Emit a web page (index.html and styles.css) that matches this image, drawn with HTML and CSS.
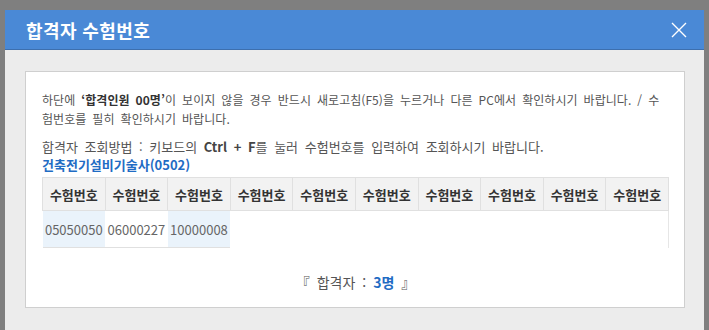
FILE: index.html
```html
<!DOCTYPE html>
<html lang="ko">
<head>
<meta charset="utf-8">
<link rel="stylesheet" href="styles.css">
</head>
<body>
<div class="backdrop">
  <div class="modal">
    <div class="modal-head">
      <h1 class="modal-title">합격자 수험번호</h1>
      <svg class="close" width="16" height="16" viewBox="0 0 16 16"><path d="M1 1L15 15M15 1L1 15" stroke="#fff" stroke-width="1.4" fill="none"/></svg>
    </div>
    <div class="modal-body">
      <div class="panel">
        <p class="notice">하단에 <b>‘합격인원 00명’</b>이 보이지 않을 경우 반드시 새로고침(F5)을 누르거나 다른 PC에서 확인하시기 바랍니다. / 수험번호를 필히 확인하시기 바랍니다.</p>
        <p class="howto">합격자 조회방법 : 키보드의 <b>Ctrl + F</b>를 눌러 수험번호를 입력하여 조회하시기 바랍니다.</p>
        <p class="subject">건축전기설비기술사(0502)</p>
        <table class="nums">
          <thead>
            <tr>
              <th>수험번호</th><th>수험번호</th><th>수험번호</th><th>수험번호</th><th>수험번호</th>
              <th>수험번호</th><th>수험번호</th><th>수험번호</th><th>수험번호</th><th>수험번호</th>
            </tr>
          </thead>
          <tbody>
            <tr>
              <td class="hl">05050050</td><td>06000227</td><td class="hl">10000008</td>
              <td class="empty" colspan="7"></td>
            </tr>
          </tbody>
        </table>
        <p class="total">『 합격자 : <strong>3명</strong> 』</p>
      </div>
    </div>
  </div>
</div>
</body>
</html>
```
FILE: styles.css
```css
html, body {
  margin: 0;
  padding: 0;
  height: 100%;
}
body {
  background: #7f7f7f;
  font-family: "Noto Sans CJK KR", "Noto Sans", sans-serif;
  overflow: hidden;
}
.backdrop {
  padding: 10px 5px 0 5px;
  height: 100%;
  box-sizing: border-box;
}
.modal {
  height: 100%;
  background: #ececec;
  display: flex;
  flex-direction: column;
}
.modal-head {
  height: 40px;
  background: #4a89d6;
  border-bottom: 1px solid #3d6fae;
  box-sizing: border-box;
  display: flex;
  align-items: center;
  justify-content: space-between;
  padding: 0 17px 0 21px;
}
.modal-title {
  margin: 0;
  color: #fff;
  font-size: 18px;
  line-height: 22px;
  font-weight: 700;
  letter-spacing: 0.4px;
}
.close {
  display: block;
}
.modal-body {
  padding: 21px 19px 0 20px;
}
.panel {
  background: #fff;
  border: 1px solid #cfcfcf;
  padding: 18px 15px 15px 16px;
}
.notice {
  margin: 0;
  font-size: 12px;
  line-height: 19px;
  color: #555;
  word-spacing: 2.6px;
  letter-spacing: 0.05px;
}
.notice b { color: #333; }
.howto {
  margin: 10px 0 0 0;
  font-size: 13px;
  line-height: 18px;
  color: #555;
  word-spacing: 3px;
}
.howto b { color: #444; }
.subject {
  margin: 0;
  font-size: 13px;
  line-height: 18px;
  font-weight: 700;
  color: #1f6cc4;
}
.nums {
  width: 100%;
  table-layout: fixed;
  border-collapse: collapse;
  margin-top: 3px;
}
.nums th {
  background: #f2f2f2;
  border: 1px solid #e0e0e0;
  height: 32px;
  font-size: 13px;
  font-weight: 700;
  color: #333;
  padding: 0;
}
.nums td {
  height: 36px;
  font-size: 13px;
  color: #666;
  text-align: center;
  padding: 0;
  border-bottom: 1px solid #e0e0e0;
  white-space: nowrap;
}
.nums td.hl { background: #eaf3fb; }
.nums td.empty {
  border-bottom: none;
  border-right: 1px solid #e6e6e6;
}
.total {
  margin: 24px 0 0 0;
  text-align: center;
  font-size: 14px;
  line-height: 20px;
  color: #555;
  word-spacing: 3px;
}
.total strong { color: #1f6cc4; }
```
